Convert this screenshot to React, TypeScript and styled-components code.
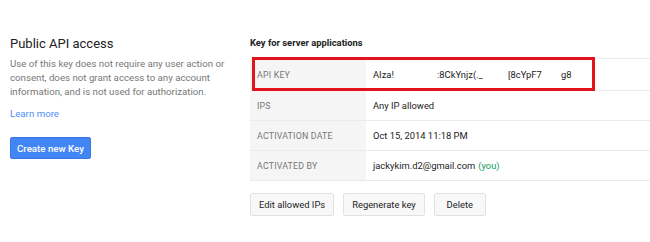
import styled, { createGlobalStyle } from 'styled-components';

const GlobalStyle = createGlobalStyle`
  html, body {
    margin: 0;
    padding: 0;
    background: #fff;
  }
  body {
    font-family: Roboto, Arial, sans-serif;
    color: #222;
  }
`;

const Page = styled.div`
  display: flex;
  width: 650px;
  height: 242px;
  overflow: hidden;
`;

const Intro = styled.div`
  width: 240px;
  padding: 36px 0 0 10px;
  box-sizing: border-box;
  flex-shrink: 0;
`;

const Heading = styled.h2`
  margin: 0;
  font-size: 13px;
  font-weight: 400;
  color: #222;
  line-height: 16px;
`;

const Description = styled.p`
  margin: 5px 0 0;
  font-size: 9.7px;
  line-height: 14px;
  color: #777;
`;

const LearnMore = styled.a`
  display: inline-block;
  margin-top: 9px;
  font-size: 9.7px;
  color: #4d8ef7;
  text-decoration: none;
`;

const PrimaryButton = styled.button`
  display: block;
  margin-top: 16px;
  height: 22px;
  padding: 0 6px;
  border: 1px solid #3b78e7;
  border-radius: 2px;
  background: #4285f4;
  color: #fff;
  font-family: Roboto, Arial, sans-serif;
  font-size: 9.7px;
  font-weight: 500;
`;

const Details = styled.div`
  flex: 1;
  padding: 36px 0 0 10px;
`;

const SectionTitle = styled.h3`
  margin: 0 0 8px;
  font-size: 9.4px;
  font-weight: 700;
  color: #222;
  line-height: 14px;
`;

const Table = styled.div`
  border-top: 1px solid #ebebeb;
  margin-right: -10px;
`;

const Row = styled.div<{ $tall?: boolean }>`
  position: relative;
  display: flex;
  height: ${({ $tall }) => ($tall ? 31 : 29)}px;
  border-bottom: 1px solid #ebebeb;
`;

const Label = styled.div`
  width: 116px;
  flex-shrink: 0;
  display: flex;
  align-items: center;
  padding-left: 7px;
  box-sizing: border-box;
  background: #f5f5f5;
  color: #777;
  font-size: 8.8px;
  letter-spacing: 0.2px;
  text-transform: uppercase;
`;

const Value = styled.div`
  flex: 1;
  display: flex;
  align-items: center;
  padding-left: 7px;
  font-size: 9.4px;
  color: #222;
  white-space: nowrap;
`;

const Highlight = styled.div`
  position: absolute;
  left: 2px;
  top: -2px;
  width: 343px;
  height: 34px;
  border: 3px solid #e3131c;
  box-sizing: border-box;
  pointer-events: none;
`;

const KeyPart = styled.span<{ $at: number }>`
  position: absolute;
  left: ${({ $at }) => $at}px;
`;

const KeyValue = styled(Value)`
  position: relative;
`;

const You = styled.span`
  color: #0f9d58;
  margin-left: 3px;
`;

const Actions = styled.div`
  display: flex;
  gap: 9px;
  margin-top: 12px;
`;

const SecondaryButton = styled.button`
  height: 23px;
  min-width: 52px;
  padding: 0 8px;
  border: 1px solid #e2e2e2;
  border-radius: 2px;
  background: #f8f8f8;
  color: #222;
  font-family: Roboto, Arial, sans-serif;
  font-size: 9.4px;
`;

// offsets inside the value cell (the key is partly masked in the original)
const keyParts = [
  { text: 'AIza!', at: 7 },
  { text: ':8CkYnjz(._', at: 71 },
  { text: '[8cYpF7', at: 142 },
  { text: 'g8', at: 195 },
];

export default function App() {
  return (
    <>
      <GlobalStyle />
      <Page>
        <Intro>
          <Heading>Public API access</Heading>
          <Description>
            Use of this key does not require any user action or consent, does
            not grant access to any account information, and is not used for
            authorization.
          </Description>
          <LearnMore href="#">Learn more</LearnMore>
          <PrimaryButton>Create new Key</PrimaryButton>
        </Intro>
        <Details>
          <SectionTitle>Key for server applications</SectionTitle>
          <Table>
            <Row $tall>
              <Label>API key</Label>
              <KeyValue>
                {keyParts.map((p) => (
                  <KeyPart key={p.text} $at={p.at}>
                    {p.text}
                  </KeyPart>
                ))}
              </KeyValue>
              <Highlight />
            </Row>
            <Row>
              <Label>IPs</Label>
              <Value>Any IP allowed</Value>
            </Row>
            <Row>
              <Label>Activation date</Label>
              <Value>Oct 15, 2014 11:18 PM</Value>
            </Row>
            <Row>
              <Label>Activated by</Label>
              <Value>
                jackykim.d2@gmail.com<You>(you)</You>
              </Value>
            </Row>
          </Table>
          <Actions>
            <SecondaryButton>Edit allowed IPs</SecondaryButton>
            <SecondaryButton>Regenerate key</SecondaryButton>
            <SecondaryButton>Delete</SecondaryButton>
          </Actions>
        </Details>
      </Page>
    </>
  );
}
